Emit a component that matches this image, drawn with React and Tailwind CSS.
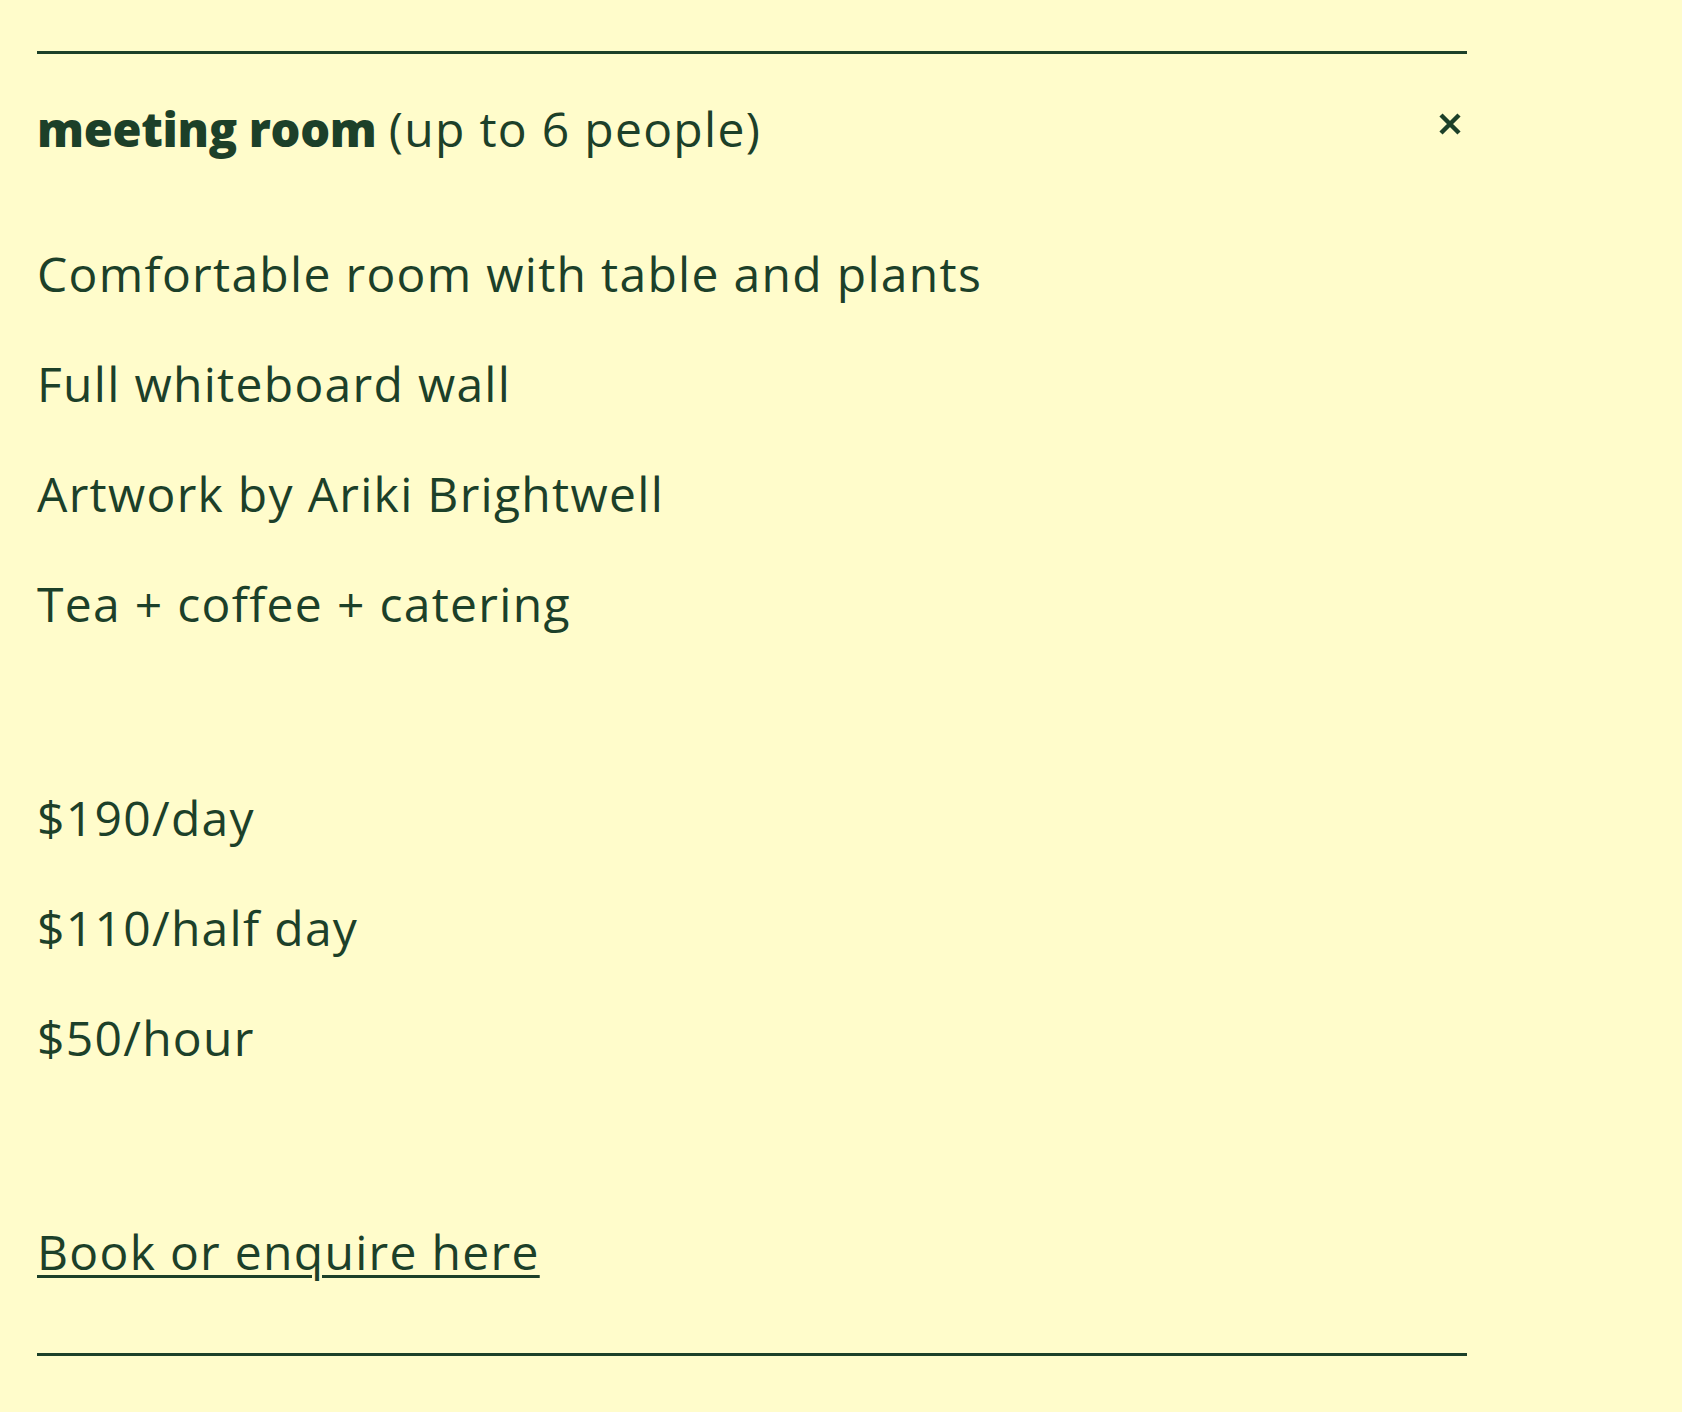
import React from "react";

export default function App() {
  const font = { fontFamily: "'Open Sans', Lato, sans-serif" };
  return (
    <div className="min-h-screen w-full bg-[#fffccb] text-[#1c4029]" style={font}>
      <div className="pl-[37px] pt-[51px] w-[1467px]">
        <div className="border-t-[3px] border-[#1c4029]" />
        <div className="flex items-start justify-between pt-[45px]">
          <h2 className="text-[47px] leading-[60px]">
            <span className="font-extrabold tracking-[-0.3px]">meeting room</span>{" "}
            <span className="font-normal text-[48px] tracking-[1.3px]">(up to 6 people)</span>
          </h2>
          <button className="mr-[5px] mt-[13px] h-[24px] w-[24px]" aria-label="Close">
            <svg viewBox="0 0 24 24" width="24" height="24">
              <path d="M3 3 L21 21 M21 3 L3 21" stroke="#1c4029" strokeWidth="4.5" strokeLinecap="butt" />
            </svg>
          </button>
        </div>
        <div className="mt-[60px] text-[48px] leading-[110px] tracking-[1.3px]">
          <p>Comfortable room with table and plants</p>
          <p>Full whiteboard wall</p>
          <p>Artwork by Ariki Brightwell</p>
          <p>Tea + coffee + catering</p>
          <div className="h-[104px]" />
          <p>$190/day</p>
          <p>$110/half day</p>
          <p>$50/hour</p>
          <div className="h-[104px]" />
          <p>
            <a href="#" className="underline decoration-[3px] underline-offset-[5px]">
              Book or enquire here
            </a>
          </p>
        </div>
        <div className="mt-[46px] border-t-[3px] border-[#1c4029]" />
      </div>
    </div>
  );
}
